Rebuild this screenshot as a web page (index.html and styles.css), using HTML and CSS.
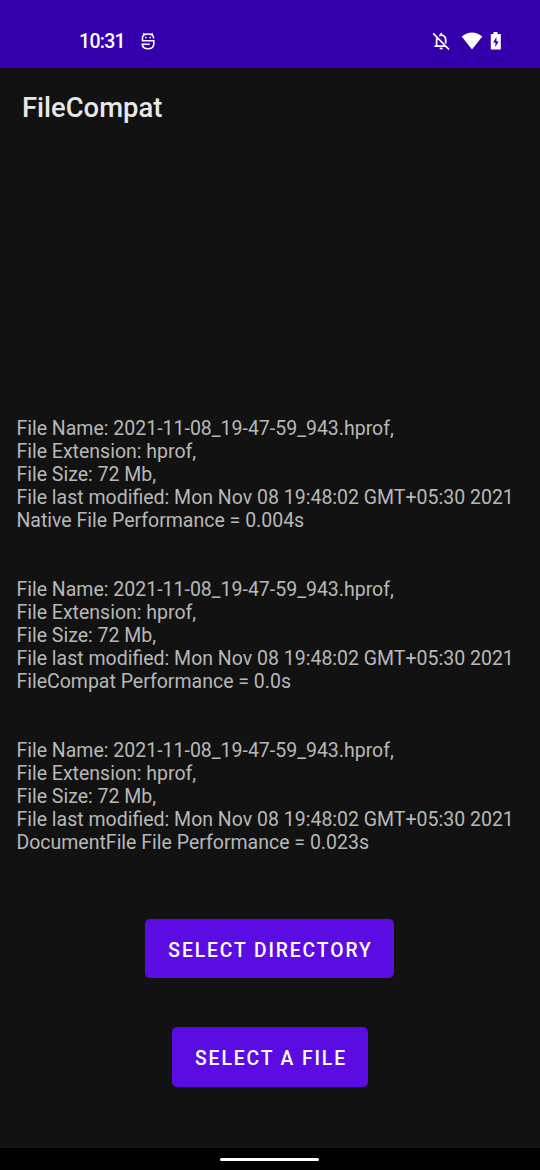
FILE: index.html
```html
<!DOCTYPE html>
<html lang="en">
<head>
<meta charset="utf-8">
<title>FileCompat</title>
<link rel="stylesheet" href="styles.css">
</head>
<body>
<div class="screen">
  <header class="status">
    <span class="clock">10:31</span>
    <svg class="notif" width="16" height="20" viewBox="0 0 16 20" fill="none" stroke="#fff" stroke-width="1.600"><path d="M3.300 2.300L4.500 3.500M12.700 2.300L11.500 3.500M13.500 7.500V6.500Q13.500 3 8 3T2.500 6.500v3.300h11.300v3q0 5-5.800 5-5.300 0-5.800-4.600h7.600"/><path d="M5 6.500h1.600M9.400 6.500H11"/></svg>
    <span class="spacer"></span>
    <svg class="bell" width="20" height="20" viewBox="0 0 20 20" fill="none" stroke="#fff" stroke-width="1.700"><path d="M2.200 2.300L18 18.500M3.500 15.200h11.200M5.600 15V9Q5.600 7.500 6.300 6.500M8.200 4.700Q9 4.200 10.200 4.200q4.500 0 4.500 5v3.200M10.200 2v2"/><path d="M8.700 17.500h3"/></svg>
    <svg class="wifi" width="22" height="18" viewBox="0 0 22 18"><path fill="#fff" d="M11 17.500L.7 4.600Q11-3.600 21.300 4.600z"/></svg>
    <svg class="battery" width="12" height="20" viewBox="0 0 12 20"><path fill="#fff" fill-rule="evenodd" d="M3.500 1h4v2h3.300v15.500H.8V3h2.700zM6.400 6L3.200 11.500h2.200V16L8.600 10.200H6.400z"/></svg>
  </header>
  <h1 class="title">FileCompat</h1>
  <main class="results">
    <p class="result">File Name: 2021-11-08_19-47-59_943.hprof,<br>File Extension: hprof,<br>File Size: 72 Mb,<br>File last modified: Mon Nov 08 19:48:02 GMT+05:30 2021<br>Native File Performance = 0.004s</p>
    <p class="result">File Name: 2021-11-08_19-47-59_943.hprof,<br>File Extension: hprof,<br>File Size: 72 Mb,<br>File last modified: Mon Nov 08 19:48:02 GMT+05:30 2021<br>FileCompat Performance = 0.0s</p>
    <p class="result">File Name: 2021-11-08_19-47-59_943.hprof,<br>File Extension: hprof,<br>File Size: 72 Mb,<br>File last modified: Mon Nov 08 19:48:02 GMT+05:30 2021<br>DocumentFile File Performance = 0.023s</p>
  </main>
  <div class="actions">
    <button class="btn btn-dir">SELECT DIRECTORY</button>
    <button class="btn btn-file">SELECT A FILE</button>
  </div>
  <footer class="nav"><span class="handle"></span></footer>
</div>
</body>
</html>
```
FILE: styles.css
```css
* { box-sizing: border-box; }
body { margin: 0; background: #121212; font-family: Roboto, "Noto Sans", sans-serif; }
.screen { width: 540px; height: 1170px; display: flex; flex-direction: column; background: #121212; overflow: hidden; }
.status { height: 68px; flex: none; background: #3500ab; color: #fff; display: flex; align-items: center; padding: 14px 38px 0 79px; }
.clock { font-size: 19.5px; font-weight: 500; line-height: 24px; width: 61px; padding-top: 2px; letter-spacing: -0.7px; white-space: nowrap; }
.spacer { flex: 1; }
.wifi { margin-left: 10px; }
.battery { margin-left: 7px; }
.title { margin: 0; height: 80px; flex: none; padding-left: 22px; font-size: 27.4px; font-weight: 500; line-height: 80px; color: #e7e7e7; }
.results { margin-top: 269px; padding-left: 16.4px; display: flex; flex-direction: column; gap: 46px; }
.result { margin: 0; font-size: 19.5px; line-height: 23px; color: #b8b8b8; white-space: nowrap; }
.actions { margin-top: 65px; display: flex; flex-direction: column; align-items: center; gap: 49px; }
.btn { height: 59px; border: 0; border-radius: 5px; padding: 3px 0 0 2px; background: #5b0ce2; color: #fff; font-family: inherit; font-size: 19.3px; font-weight: 500; letter-spacing: 1.9px; }
.btn-dir { width: 249px; margin-right: 1px; }
.btn-file { width: 196px; height: 60px; }
.nav { margin-top: auto; height: 22px; background: #000; display: flex; justify-content: center; align-items: center; }
.handle { width: 99px; height: 3px; margin-right: 1px; border-radius: 2px; background: #fff; }
```
